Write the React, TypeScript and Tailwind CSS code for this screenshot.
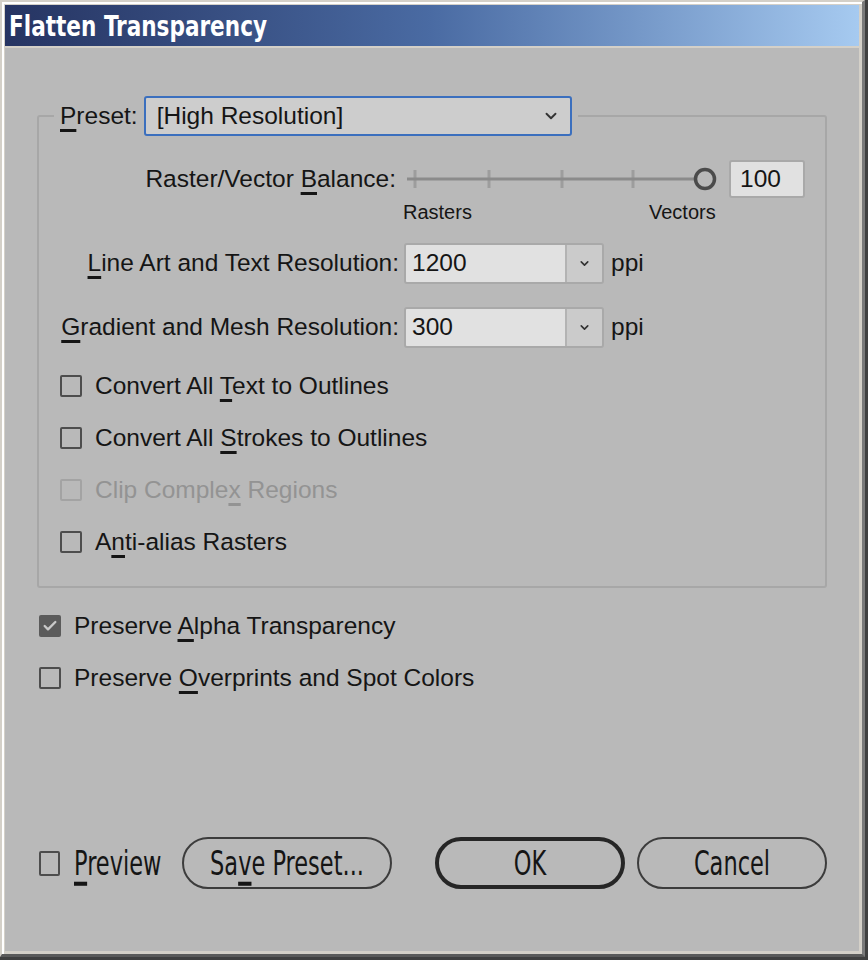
import { Check, ChevronDown } from 'lucide-react'
import type { ReactNode } from 'react'

const ui = { fontFamily: '"Liberation Sans", Arial, sans-serif' }
const narrow = { fontFamily: '"Liberation Sans Narrow", "DejaVu Sans Condensed", "Liberation Sans", sans-serif' }

function U({ children }: { children: ReactNode }) {
  return <span className="underline decoration-[2.5px] underline-offset-[5px]">{children}</span>
}

function Box({ checked, disabled }: { checked?: boolean; disabled?: boolean }) {
  if (checked) {
    return (
      <span className="w-[22px] h-[22px] rounded-[2px] bg-[#5b5b5b] flex items-center justify-center shrink-0">
        <Check size={16} strokeWidth={3.5} color="#c9c9c9" />
      </span>
    )
  }
  return (
    <span
      className={
        'w-[22px] h-[22px] rounded-[2px] border-2 shrink-0 ' +
        (disabled ? 'border-[#a3a3a3]' : 'border-[#4d4d4d]')
      }
    />
  )
}

function CheckRow({ label, checked, disabled }: { label: ReactNode; checked?: boolean; disabled?: boolean }) {
  return (
    <div className="flex items-center h-[30px] gap-[13px]">
      <Box checked={checked} disabled={disabled} />
      <span className={disabled ? 'text-[#939393]' : 'text-[#151515]'}>{label}</span>
    </div>
  )
}

function Combo({ value }: { value: string }) {
  return (
    <div className="flex w-[200px] h-[41px] border-2 border-[#a9a9a9] rounded-[3px] overflow-hidden">
      <div className="flex-1 bg-[#e1e1e1] flex items-center pl-[6px] text-[#151515]">{value}</div>
      <div className="w-[37px] bg-[#cbcbcb] border-l-2 border-[#b3b3b3] flex items-center justify-center">
        <ChevronDown size={13} strokeWidth={3} color="#333" />
      </div>
    </div>
  )
}

function Slider() {
  const ticks = [14, 88, 161, 232]
  return (
    <svg width="323" height="40" viewBox="0 0 323 40" className="ml-[5px] shrink-0">
      {ticks.map((x) => (
        <rect key={x} x={x - 1.5} y={11} width={3} height={18} fill="#9d9d9d" />
      ))}
      <rect x={6} y={18.5} width={288} height={3} fill="#8b8b8b" />
      <circle cx={304} cy={20} r={9.5} fill="none" stroke="#4b4b4b" strokeWidth={3.5} />
    </svg>
  )
}

function PillButton({ children, primary, className }: { children: ReactNode; primary?: boolean; className?: string }) {
  return (
    <button
      className={
        'h-[52px] rounded-full flex items-center justify-center text-[#151515] ' +
        (primary ? 'border-[4px] border-[#262626] ' : 'border-2 border-[#3c3c3c] ') +
        (className ?? '')
      }
      style={narrow}
    >
      <span className="inline-block scale-y-[1.35] text-[25px] leading-none">{children}</span>
    </button>
  )
}

export default function App() {
  return (
    <div className="w-[868px] h-[960px] bg-[#404040] flex flex-col" style={ui}>
      <div className="flex-1 flex flex-col border-t-2 border-l-2 border-[#d4d0c8] border-r-[3px] border-b-[3px] border-r-[#7a7a7a] border-b-[#5a5a5a] mr-[3px] mb-[3px] bg-[#d4d0c8]">
        <div className="flex-1 flex flex-col border-t-2 border-l-2 border-white border-r-0 border-b-0 pr-[3px] pb-[3px] pl-[1px] pt-[1px]">
          {/* title bar */}
          <div className="h-[41px] flex items-center pl-[4px] bg-gradient-to-r from-[#263462] via-[#4a6ba3] to-[#a6caf0]">
            <span className="inline-block scale-y-[1.2] text-white font-bold text-[24px] leading-none" style={narrow}>
              Flatten Transparency
            </span>
          </div>

          {/* body */}
          <div className="flex-1 flex flex-col bg-[#b9b9b9] border-t-2 border-[#d4d0c8] text-[24.5px] text-[#151515]">
            <fieldset className="mt-[48px] mx-[32px] border-2 border-[#a7a7a7] rounded-[3px] pt-[24px] pb-[29px]">
              <legend className="ml-[15px] px-[6px] flex items-center gap-[6px]">
                <span>
                  <U>P</U>reset:
                </span>
                <div className="w-[428px] h-[40px] border-2 border-[#3b6fbe] rounded-[3px] bg-[#cdcdcd] flex items-center justify-between pl-[11px] pr-[10px]">
                  <span>[High Resolution]</span>
                  <ChevronDown size={18} strokeWidth={2.5} color="#333" />
                </div>
              </legend>

              <div className="flex items-center h-[38px]">
                <span className="w-[357px] text-right">
                  Raster/Vector <U>B</U>alance:
                </span>
                <Slider />
                <div className="ml-[5px] w-[76px] h-[38px] bg-[#e1e1e1] border-2 border-[#a9a9a9] rounded-[3px] flex items-center pl-[9px]">
                  100
                </div>
              </div>

              <div className="flex mt-[3px] ml-[364px] h-[22px] items-center text-[20px]">
                <span className="w-[246px]">Rasters</span>
                <span>Vectors</span>
              </div>

              <div className="flex items-center mt-[20px]">
                <span className="w-[360px] text-right">
                  <U>L</U>ine Art and Text Resolution:
                </span>
                <div className="ml-[5px]">
                  <Combo value="1200" />
                </div>
                <span className="ml-[7px]">ppi</span>
              </div>

              <div className="flex items-center mt-[23px]">
                <span className="w-[360px] text-right">
                  <U>G</U>radient and Mesh Resolution:
                </span>
                <div className="ml-[5px]">
                  <Combo value="300" />
                </div>
                <span className="ml-[7px]">ppi</span>
              </div>

              <div className="flex flex-col gap-[22px] mt-[23px] pl-[21px]">
                <CheckRow label={<>Convert All <U>T</U>ext to Outlines</>} />
                <CheckRow label={<>Convert All <U>S</U>trokes to Outlines</>} />
                <CheckRow disabled label={<>Clip Comple<U>x</U> Regions</>} />
                <CheckRow label={<>A<U>n</U>ti-alias Rasters</>} />
              </div>
            </fieldset>

            <div className="flex flex-col gap-[22px] mt-[23px] pl-[34px]">
              <CheckRow checked label={<>Preserve <U>A</U>lpha Transparency</>} />
              <CheckRow label={<>Preserve <U>O</U>verprints and Spot Colors</>} />
            </div>

            <div className="flex-1" />

            <div className="flex items-center pl-[34px] pb-[62px]">
              <div className="w-[143px] flex items-center gap-[14px]">
                <span className="w-[21px] h-[25px] border-2 border-[#4d4d4d] rounded-[2px]" />
                <span className="inline-block scale-y-[1.35] text-[25px] leading-none" style={narrow}>
                  <U>P</U>review
                </span>
              </div>
              <PillButton className="w-[210px]">
                Sa<U>v</U>e Preset...
              </PillButton>
              <PillButton primary className="w-[190px] ml-[43px]">
                OK
              </PillButton>
              <PillButton className="w-[190px] ml-[12px]">Cancel</PillButton>
            </div>
          </div>
        </div>
      </div>
    </div>
  )
}
